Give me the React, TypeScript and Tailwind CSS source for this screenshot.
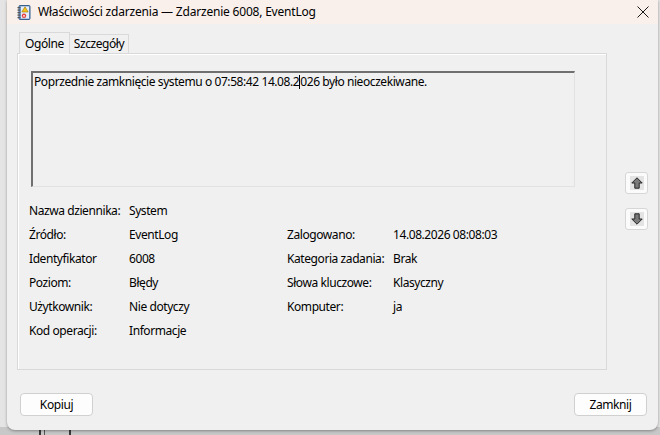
import React from "react";

const font = { fontFamily: '"Noto Sans", "Segoe UI", sans-serif' };

function EventIcon() {
  return (
    <svg width="14" height="15" viewBox="0 0 14 15">
      <rect x="2" y="0.5" width="11" height="14" rx="1" fill="#7aa6d6" stroke="#3b5f8c" />
      <rect x="4" y="1.5" width="8" height="12" fill="#e8eef7" />
      {[2, 4.5, 7, 9.5, 12].map((y) => (
        <rect key={y} x="0.5" y={y} width="3" height="1.2" fill="#555" />
      ))}
      <path d="M8 1.8 L11.2 7 L4.8 7 Z" fill="#f4c21a" stroke="#9a7400" strokeWidth="0.6" />
      <circle cx="7" cy="10.8" r="2.3" fill="#e23b3b" />
      <path d="M6 9.8 L8 11.8 M8 9.8 L6 11.8" stroke="#fff" strokeWidth="0.8" />
    </svg>
  );
}

function ArrowButton({ down }: { down?: boolean }) {
  return (
    <div className="w-[23px] h-[22px] rounded-[3px] border border-[#d6d6d6] bg-[#fbfbfb] flex items-center justify-center">
      <div className="w-[14px] h-[14px] bg-[#e4e4e4] flex items-center justify-center">
        <svg width="12" height="12" viewBox="0 0 12 12" style={{ transform: down ? "rotate(180deg)" : undefined }}>
          <path d="M6 0.8 L11.2 6 L8.2 6 L8.2 11.2 L3.8 11.2 L3.8 6 L0.8 6 Z" fill="#7a7a7a" stroke="#262626" strokeWidth="1" strokeLinejoin="round" />
        </svg>
      </div>
    </div>
  );
}

function Field({ label, value, labelW }: { label: string; value: string; labelW: string }) {
  return (
    <div className="flex h-[24px] items-center">
      <span className={labelW}>{label}</span>
      <span>{value}</span>
    </div>
  );
}

export default function App() {
  return (
    <div className="relative w-[660px] h-[435px] overflow-hidden bg-[#e4e4e4] text-[12px] text-black tracking-[-0.42px]" style={font}>
      {/* window behind, peeking out at the bottom */}
      <div className="absolute left-0 right-0 bottom-0 h-[8px] bg-[#c8c8c8]">
        <div className="absolute left-[39px] top-0 w-[2px] h-full bg-[#3a3a3a]" />
        <div className="absolute left-[44px] top-0 w-[1px] h-full bg-[#555]" />
        <div className="absolute left-[69px] top-0 w-[2px] h-full bg-[#3a3a3a]" />
      </div>

      <div className="relative ml-[7px] w-[651px] h-[430px] bg-[#f0f0f0] rounded-b-[8px] shadow-[0_1px_3px_rgba(0,0,0,0.35)] flex flex-col">
        {/* title bar */}
        <div className="h-[24px] bg-[#f9f0ec] flex items-center pl-[10px] pr-[9px]">
          <EventIcon />
          <span className="ml-[7px] leading-none tracking-[-0.2px]">Właściwości zdarzenia — Zdarzenie 6008, EventLog</span>
          <svg className="ml-auto" width="12" height="12" viewBox="0 0 12 12">
            <path d="M0.5 0.5 L11.5 11.5 M11.5 0.5 L0.5 11.5" stroke="#1a1a1a" strokeWidth="1" />
          </svg>
        </div>

        <div className="flex flex-1 pl-[10px] pt-[8px]">
          <div className="flex flex-col w-[590px]">
            {/* tabs */}
            <div className="flex items-end h-[21px] pl-[2px]">
              <div className="relative z-10 h-[22px] w-[51px] -mb-[1px] border border-b-0 border-[#d9d9d9] bg-[#f0f0f0] flex items-center justify-center">
                Ogólne
              </div>
              <div className="h-[19px] w-[59px] border border-l-0 border-b-0 border-[#d9d9d9] bg-[#f0f0f0] flex items-center justify-center">
                Szczegóły
              </div>
            </div>

            {/* tab page */}
            <div className="h-[317px] border border-[#d9d9d9] shadow-[inset_1px_1px_0_#fff] pl-[13px] pt-[17px]">
              <div className="w-[544px] h-[116px] border-t-2 border-l-2 border-t-[#707070] border-l-[#707070] border-r border-b border-r-[#e2e2e2] border-b-[#e2e2e2] pl-[1px] leading-[18px]">
                <span>
                  Poprzednie zamknięcie systemu o 07:58:42 14.08.2
                  <span className="inline-block w-[1px] h-[14px] bg-black align-middle -mt-[2px]" />
                  026 było nieoczekiwane.
                </span>
              </div>

              <div className="flex mt-[12px] -ml-[2px]">
                <div className="w-[259px]">
                  <Field label="Nazwa dziennika:" value="System" labelW="w-[100px]" />
                  <Field label="Źródło:" value="EventLog" labelW="w-[100px]" />
                  <Field label="Identyfikator" value="6008" labelW="w-[100px]" />
                  <Field label="Poziom:" value="Błędy" labelW="w-[100px]" />
                  <Field label="Użytkownik:" value="Nie dotyczy" labelW="w-[100px]" />
                  <Field label="Kod operacji:" value="Informacje" labelW="w-[100px]" />
                </div>
                <div className="pt-[24px] -ml-[1px]">
                  <Field label="Zalogowano:" value="14.08.2026 08:08:03" labelW="w-[106px]" />
                  <Field label="Kategoria zadania:" value="Brak" labelW="w-[106px]" />
                  <Field label="Słowa kluczowe:" value="Klasyczny" labelW="w-[106px]" />
                  <Field label="Komputer:" value="ja" labelW="w-[106px]" />
                </div>
              </div>
            </div>

            {/* dialog buttons */}
            <div className="flex justify-between mt-[23px] pl-[3px] mr-[-40px]">
              <button className="w-[73px] h-[23px] rounded-[4px] border border-[#d0d0d0] bg-[#fdfdfd] text-[12px] tracking-[-0.4px]" style={font}>
                Kopiuj
              </button>
              <button className="w-[73px] h-[23px] rounded-[4px] border border-[#d0d0d0] bg-[#fdfdfd] text-[12px] tracking-[-0.4px]" style={font}>
                Zamknij
              </button>
            </div>
          </div>

          {/* record navigation */}
          <div className="flex flex-col gap-[14px] ml-[18px] pt-[140px]">
            <ArrowButton />
            <ArrowButton down />
          </div>
        </div>
      </div>
    </div>
  );
}
